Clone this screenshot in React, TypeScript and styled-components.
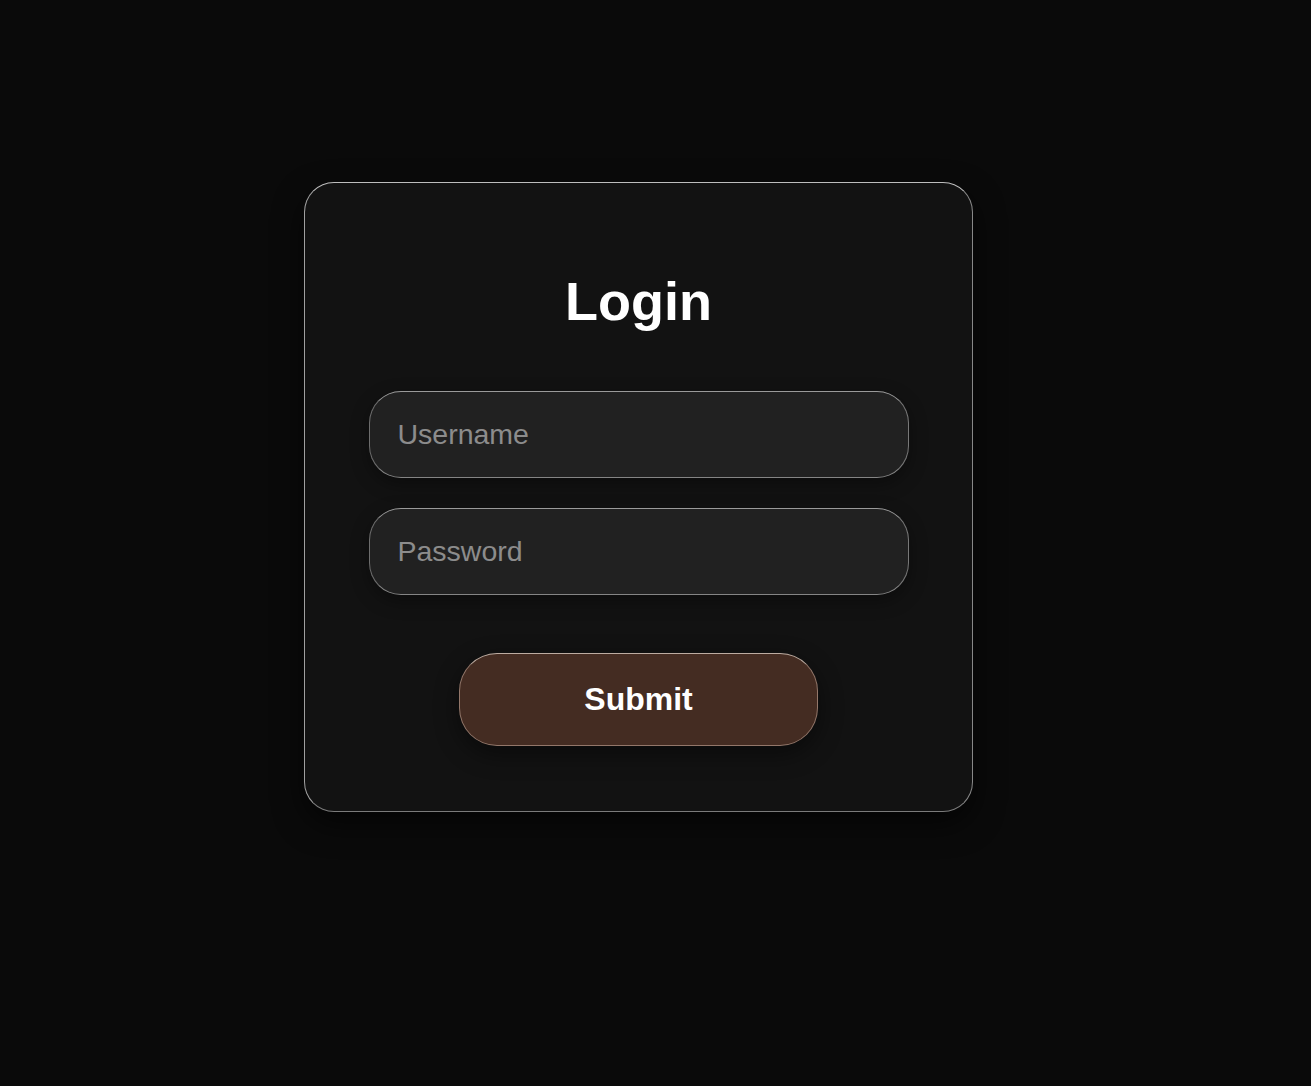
import React from "react";
import styled, { createGlobalStyle } from "styled-components";

const Global = createGlobalStyle`
  html, body {
    margin: 0;
    padding: 0;
    background: #0a0a0a;
    font-family: "Liberation Sans", Arial, sans-serif;
  }
  * { box-sizing: border-box; }
`;

const Page = styled.div`
  min-height: 1086px;
  display: flex;
  justify-content: center;
  align-items: flex-start;
  padding: 182px 34px 0 0;
`;

const Card = styled.form`
  width: 669px;
  height: 630px;
  background: #121212;
  border-radius: 30px;
  border: 1px solid rgba(255, 255, 255, 0.5);
  border-top-color: rgba(255, 255, 255, 0.72);
  border-left-color: rgba(255, 255, 255, 0.6);
  border-bottom-color: rgba(255, 255, 255, 0.45);
  box-shadow: 0 12px 30px rgba(0, 0, 0, 0.6);
  padding: 89px 64px 0 64px;
  display: flex;
  flex-direction: column;
  align-items: center;
`;

const Title = styled.h1`
  margin: 0 0 60px 0;
  font-size: 54px;
  font-weight: 700;
  color: #ffffff;
  line-height: 59px;
`;

const Field = styled.input<{ $mb: number }>`
  width: 540px;
  height: 87px;
  border-radius: 32px;
  background: #212121;
  border: 1px solid rgba(255, 255, 255, 0.4);
  border-top-color: rgba(255, 255, 255, 0.55);
  border-bottom-color: rgba(255, 255, 255, 0.45);
  border-left-color: rgba(255, 255, 255, 0.35);
  box-shadow: 0 6px 18px rgba(0, 0, 0, 0.35);
  padding: 0 28px;
  font-family: "Liberation Sans", Arial, sans-serif;
  font-size: 28.5px;
  color: #dddddd;
  outline: none;
  margin-bottom: ${(p) => p.$mb}px;

  &::placeholder {
    color: #8c8c8c;
  }
`;

const Submit = styled.button`
  width: 359px;
  height: 93px;
  border-radius: 38px;
  background: #442c22;
  border: 1px solid rgba(200, 170, 155, 0.6);
  border-top-color: rgba(230, 215, 205, 0.75);
  box-shadow: 0 8px 24px rgba(0, 0, 0, 0.45);
  color: #ffffff;
  font-family: "Liberation Sans", Arial, sans-serif;
  font-size: 32px;
  font-weight: 700;
  cursor: pointer;
`;

export default function App() {
  return (
    <>
      <Global />
      <Page>
        <Card onSubmit={(e) => e.preventDefault()}>
          <Title>Login</Title>
          <Field type="text" placeholder="Username" $mb={30} />
          <Field type="password" placeholder="Password" $mb={58} />
          <Submit type="submit">Submit</Submit>
        </Card>
      </Page>
    </>
  );
}
